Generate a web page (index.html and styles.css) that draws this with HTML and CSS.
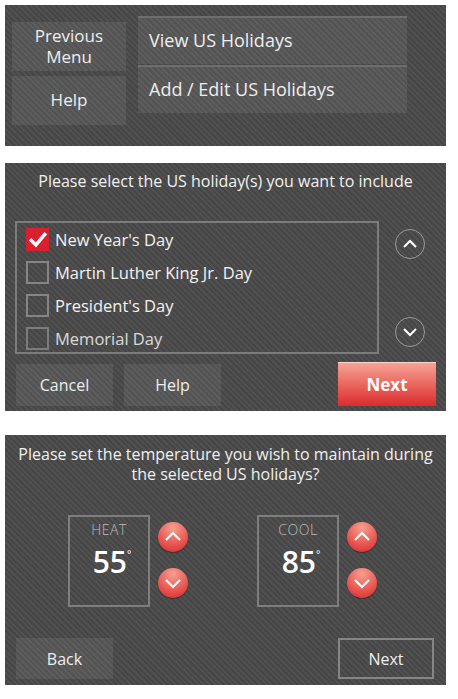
FILE: index.html
```html
<!DOCTYPE html>
<html lang="en">
<head>
    <meta charset="UTF-8">
    <meta name="viewport" content="width=device-width, initial-scale=1.0">
    <title>US Holidays</title>
    <link rel="stylesheet" href="styles.css">
</head>
<body>

    <div class="panel menu-panel">
        <div class="menu-left">
            <div class="btn menu-btn">Previous<br>Menu</div>
            <div class="btn menu-btn">Help</div>
        </div>
        <div class="menu-right">
            <div class="btn option-btn">View US Holidays</div>
            <div class="btn option-btn">Add / Edit US Holidays</div>
        </div>
    </div>

    <div class="panel select-panel">
        <h3 class="title">Please select the US holiday(s) you want to include</h3>
        <div class="list-row">
            <div class="list-box">
                <div class="item">
                    <span class="check checked">
                        <svg viewBox="0 0 24 24" width="20" height="20"><path d="M4 12.5 L9.5 18 L20 5.5" fill="none" stroke="#fff" stroke-width="4.2" stroke-linecap="square"/></svg>
                    </span>
                    New Year's Day
                </div>
                <div class="item"><span class="check"></span>Martin Luther King Jr. Day</div>
                <div class="item"><span class="check"></span>President's Day</div>
                <div class="item fade"><span class="check"></span>Memorial Day</div>
            </div>
            <div class="scroll-col">
                <div class="scroll-btn">
                    <svg viewBox="0 0 28 28" width="28" height="28"><path d="M8 17 L14 11 L20 17" fill="none" stroke="#fff" stroke-width="2"/></svg>
                </div>
                <div class="scroll-btn">
                    <svg viewBox="0 0 28 28" width="28" height="28"><path d="M8 11 L14 17 L20 11" fill="none" stroke="#fff" stroke-width="2"/></svg>
                </div>
            </div>
        </div>
        <div class="actions">
            <div class="btn action-btn">Cancel</div>
            <div class="btn action-btn help">Help</div>
            <div class="btn next-red">Next</div>
        </div>
    </div>

    <div class="panel temp-panel">
        <h3 class="title two-line">Please set the temperature you wish to maintain during<br>the selected US holidays?</h3>
        <div class="temp-row">
            <div class="temp-group">
                <div class="temp-box">
                    <div class="temp-label">HEAT</div>
                    <div class="temp-value">55<sup>°</sup></div>
                </div>
                <div class="arrows">
                    <div class="arrow-btn">
                        <svg viewBox="0 0 30 30" width="30" height="30"><path d="M8 18 L15 11 L22 18" fill="none" stroke="#fff" stroke-width="2"/></svg>
                    </div>
                    <div class="arrow-btn">
                        <svg viewBox="0 0 30 30" width="30" height="30"><path d="M8 12 L15 19 L22 12" fill="none" stroke="#fff" stroke-width="2"/></svg>
                    </div>
                </div>
            </div>
            <div class="temp-group">
                <div class="temp-box">
                    <div class="temp-label">COOL</div>
                    <div class="temp-value">85<sup>°</sup></div>
                </div>
                <div class="arrows">
                    <div class="arrow-btn">
                        <svg viewBox="0 0 30 30" width="30" height="30"><path d="M8 18 L15 11 L22 18" fill="none" stroke="#fff" stroke-width="2"/></svg>
                    </div>
                    <div class="arrow-btn">
                        <svg viewBox="0 0 30 30" width="30" height="30"><path d="M8 12 L15 19 L22 12" fill="none" stroke="#fff" stroke-width="2"/></svg>
                    </div>
                </div>
            </div>
        </div>
        <div class="actions bottom">
            <div class="btn action-btn">Back</div>
            <div class="btn next-outline">Next</div>
        </div>
    </div>

</body>
</html>
```

FILE: styles.css
```css
body {
    font-family: "Open Sans", Arial, sans-serif;
    background-color: #fff;
    margin: 0;
    padding: 5px 0 0 5px;
    color: #eee;
}
.panel {
    width: 441px;
    box-sizing: border-box;
    background-color: #4a4a4a;
    background-image: repeating-linear-gradient(45deg, rgba(255,255,255,0.035) 0 2px, rgba(0,0,0,0.06) 2px 4px);
}
.btn {
    background-color: #575757;
    background-image: repeating-linear-gradient(45deg, rgba(255,255,255,0.035) 0 2px, rgba(0,0,0,0.05) 2px 4px);
    color: #eee;
    box-sizing: border-box;
    display: flex;
    align-items: center;
}

/* top menu */
.menu-panel {
    height: 141px;
    display: flex;
    align-items: flex-start;
}
.menu-left {
    margin: 17px 0 0 7px;
    width: 114px;
    display: flex;
    flex-direction: column;
    gap: 5px;
}
.menu-btn {
    height: 49px;
    justify-content: center;
    text-align: center;
    font-size: 17px;
    line-height: 21px;
    padding-bottom: 2px;
}
.menu-right {
    margin: 11px 0 0 12px;
    width: 269px;
    display: flex;
    flex-direction: column;
    gap: 1px;
}
.option-btn {
    height: 48px;
    padding-left: 11px;
    font-size: 18px;
    border-top: 2px solid #6e6e6e;
    padding-bottom: 3px;
}

/* holiday selection */
.select-panel {
    margin-top: 17px;
    height: 248px;
    padding-top: 7px;
}
.title {
    margin: 0;
    font-weight: normal;
    font-size: 16px;
    line-height: 22px;
    text-align: center;
    color: #f0f0f0;
}
.list-row {
    display: flex;
    margin-top: 29px;
}
.list-box {
    margin-left: 10px;
    width: 364px;
    height: 133px;
    box-sizing: border-box;
    border: 2px solid #7c7c7c;
    padding: 0 0 0 9px;
    overflow: hidden;
}
.item {
    height: 33px;
    display: flex;
    align-items: center;
    gap: 6px;
    font-size: 16.5px;
    color: #f2f2f2;
}
.item.fade {
    opacity: 0.85;
}
.check {
    width: 23px;
    height: 23px;
    box-sizing: border-box;
    border: 2px solid #858585;
    display: flex;
    align-items: center;
    justify-content: center;
    flex-shrink: 0;
}
.check.checked {
    background: #d8202f;
    border: none;
}
.scroll-col {
    margin-left: 16px;
    display: flex;
    flex-direction: column;
    gap: 58px;
    padding-top: 8px;
}
.scroll-btn {
    width: 28px;
    height: 28px;
    border: 1px solid #9a9a9a;
    border-radius: 50%;
    display: flex;
    align-items: center;
    justify-content: center;
}
.actions {
    display: flex;
    align-items: flex-end;
    margin-top: 8px;
    padding-left: 11px;
}
.action-btn {
    width: 97px;
    height: 42px;
    justify-content: center;
    font-size: 16px;
}
.action-btn.help {
    margin-left: 11px;
}
.next-red {
    margin-left: auto;
    margin-right: 10px;
    width: 98px;
    height: 44px;
    justify-content: center;
    font-size: 17px;
    font-weight: bold;
    color: #fff;
    background: linear-gradient(#f6a395, #e9605a 55%, #db2b2e);
    border-top: 1px solid #fbd4cc;
}

/* temperature */
.temp-panel {
    margin-top: 24px;
    height: 250px;
    padding-top: 9px;
}
.title.two-line {
    font-size: 16px;
    line-height: 20px;
}
.temp-row {
    display: flex;
    margin-top: 31px;
    padding-left: 63px;
    gap: 69px;
}
.temp-group {
    display: flex;
    gap: 8px;
}
.temp-box {
    width: 82px;
    height: 92px;
    box-sizing: border-box;
    border: 2px solid #7e7e7e;
    text-align: center;
}
.temp-label {
    margin-top: 4px;
    font-size: 14px;
    font-weight: 300;
    line-height: 18px;
    color: #bdbdbd;
    letter-spacing: 0.5px;
}
.temp-value {
    font-size: 30px;
    font-weight: 600;
    line-height: 30px;
    color: #fff;
    padding-left: 6px;
}
.temp-value sup {
    font-size: 10px;
    font-weight: normal;
    vertical-align: 15px;
}
.arrows {
    display: flex;
    flex-direction: column;
    gap: 16px;
    padding-top: 7px;
}
.arrow-btn {
    width: 30px;
    height: 30px;
    border-radius: 50%;
    background: radial-gradient(circle at 50% 20%, #f5a090, #e8544f 60%, #d42a2c);
    box-shadow: 0 1px 1px rgba(0,0,0,0.35);
}
.actions.bottom {
    margin-top: 31px;
    align-items: flex-start;
}
.actions.bottom .action-btn {
    height: 41px;
}
.next-outline {
    margin-left: auto;
    margin-right: 12px;
    width: 96px;
    height: 41px;
    justify-content: center;
    font-size: 16px;
    background: transparent;
    border: 2px solid #858585;
}
```
